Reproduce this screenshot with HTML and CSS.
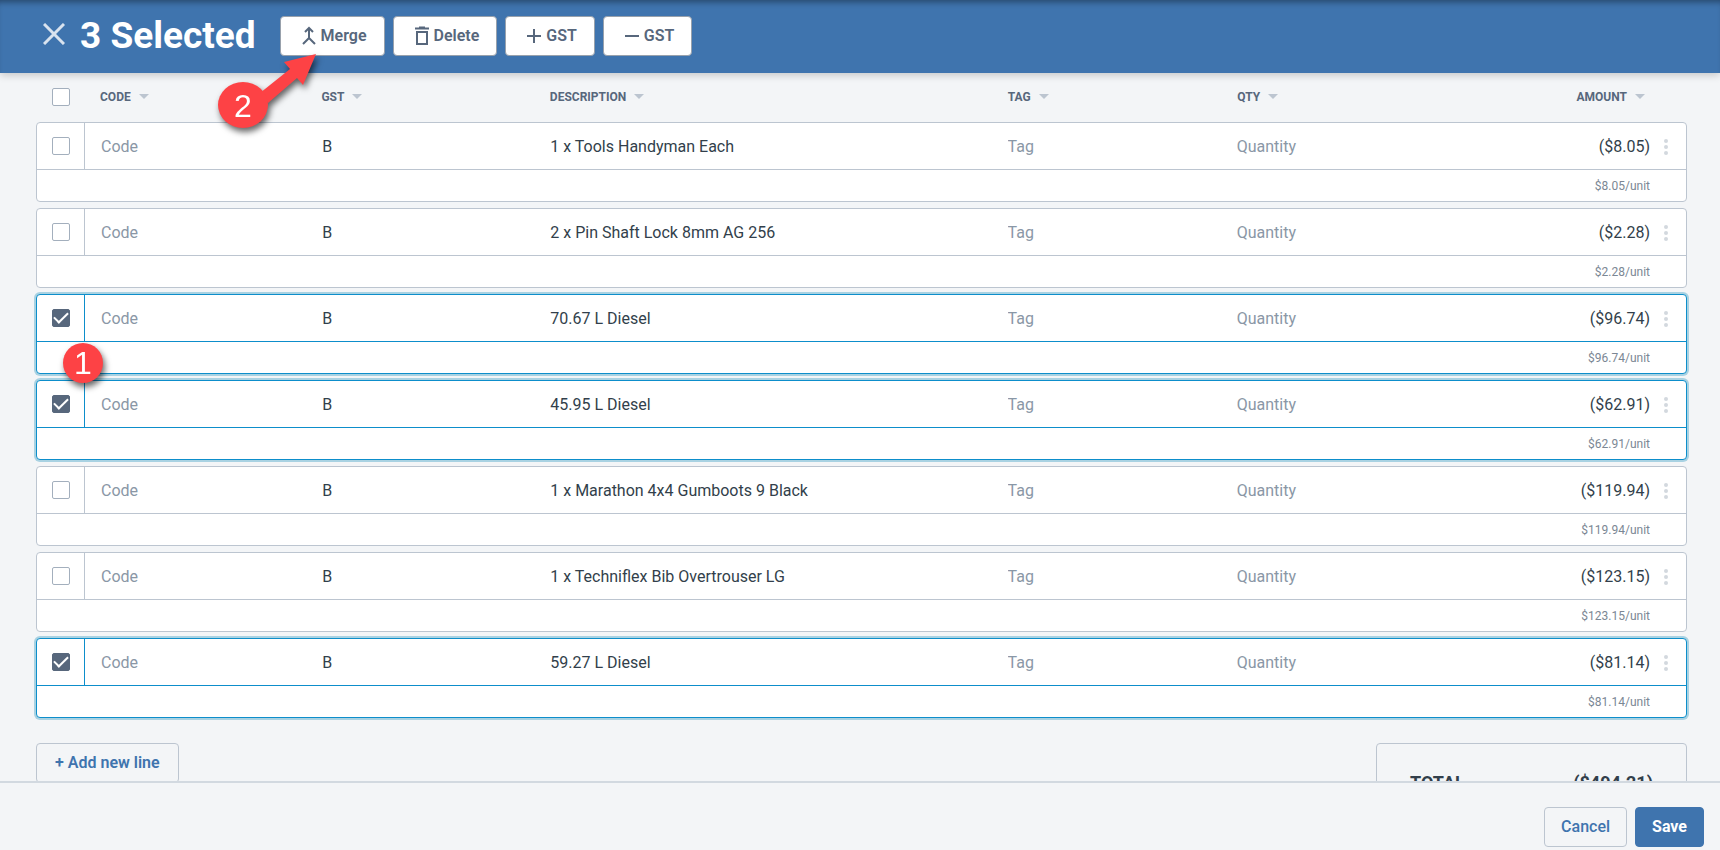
FILE: index.html
```html
<!DOCTYPE html>
<html lang="en">
<head>
    <meta charset="UTF-8">
    <meta name="viewport" content="width=device-width, initial-scale=1.0">
    <title>Line items</title>
    <link rel="stylesheet" href="styles.css">
</head>
<body>
    <header class="toolbar">
        <button class="close" aria-label="Clear selection">
            <svg width="22" height="22" viewBox="0 0 22 22"><path d="M1 1L21 21M21 1L1 21"/></svg>
        </button>
        <h1>3 Selected</h1>
        <div class="actions">
            <button class="action">
                <svg width="16" height="20" viewBox="0 0 16 20"><path d="M8 3V12L2 18M8 12L14 18"/><path d="M4 6L8 2L12 6"/></svg>
                Merge
            </button>
            <button class="action">
                <svg width="16" height="20" viewBox="0 0 16 20"><path d="M1 2.5H15M5 1.5H11M3 6H13V18H3Z"/></svg>
                Delete
            </button>
            <button class="action">
                <svg width="16" height="20" viewBox="0 0 16 20"><path d="M1 10H15M8 3V17"/></svg>
                GST
            </button>
            <button class="action">
                <svg width="16" height="20" viewBox="0 0 16 20"><path d="M1 10H15"/></svg>
                GST
            </button>
        </div>
    </header>

    <main class="content">
        <table class="items">
            <thead>
                <tr>
                    <th class="check"><input type="checkbox" aria-label="Select all"></th>
                    <th>Code</th>
                    <th>GST</th>
                    <th>Description</th>
                    <th>Tag</th>
                    <th>Qty</th>
                    <th class="amount">Amount</th>
                </tr>
            </thead>
        </table>

        <div class="bottom">
            <button class="add">+ Add new line</button>
            <div class="total">
                <span>TOTAL</span>
                <span>($494.21)</span>
            </div>
        </div>
    </main>

    <footer class="footer">
        <button class="cancel">Cancel</button>
        <button class="save">Save</button>
    </footer>

    <svg class="marker marker-one" width="60" height="60" viewBox="0 0 60 60">
        <circle cx="30" cy="30" r="20"/>
        <text x="30" y="41">1</text>
    </svg>
    <svg class="marker marker-two" width="120" height="100" viewBox="0 0 120 100">
        <path d="M106 14L93 45L87 38L58 63L50 53L80 29L74 22Z"/>
        <ellipse cx="33" cy="65" rx="25" ry="23"/>
        <text x="33" y="77">2</text>
    </svg>

    <script src="script.js"></script>
</body>
</html>
```
FILE: styles.css
```css
* {
    box-sizing: border-box;
}
body {
    display: flex;
    flex-direction: column;
    height: 100vh;
    margin: 0;
    overflow: hidden;
    background-color: #f3f5f7;
    color: #323f4b;
    font-family: Roboto, "Noto Sans", sans-serif;
    font-size: 16px;
    line-height: 20px;
}
button, input {
    font: inherit;
}
button {
    cursor: pointer;
}

/* top bar */
.toolbar {
    display: flex;
    align-items: center;
    flex-shrink: 0;
    height: 73px;
    padding: 0 43px 1px;
    background-color: #3f74ae;
    box-shadow: inset 0 6px 6px -4px rgba(0, 0, 0, 0.4), 0 2px 8px rgba(0, 0, 0, 0.2);
}
.close {
    display: flex;
    padding: 0 0 4px;
    border: none;
    background: none;
}
.close svg {
    fill: none;
    stroke: #d9e3ef;
    stroke-width: 3;
}
h1 {
    margin: 0 24px 0 15px;
    color: #fff;
    font-size: 37px;
    font-weight: 700;
    line-height: 40px;
}
.actions {
    display: flex;
    gap: 8px;
}
.action {
    display: flex;
    align-items: center;
    gap: 4px;
    height: 40px;
    padding: 0 17px 0 20px;
    border: 1px solid #98a1ac;
    border-radius: 4px;
    background-color: #fff;
    color: #57677c;
    font-weight: 600;
}
.action svg {
    fill: none;
    stroke: #57677c;
    stroke-width: 2;
}

/* line items */
.content {
    flex: 1;
    min-height: 0;
    padding: 0 33px 0 36px;
    overflow: hidden;
}
.items, .items thead, .items tbody {
    display: block;
}
.items tr {
    display: grid;
    grid-template-columns: 48px 221fr 228fr 457fr 229fr 229fr 200fr 36px;
}
.items th, .items td {
    display: flex;
    align-items: center;
    padding: 2px 0 0 16px;
    font-weight: 400;
}
.items thead tr {
    height: 49px;
}
.items thead th {
    padding-top: 0;
    padding-bottom: 2px;
    color: #57677c;
    font-size: 12px;
    font-weight: 700;
    text-transform: uppercase;
}
.items th:not(.check)::after {
    content: "";
    margin-left: 8px;
    border: 5px solid transparent;
    border-top-color: #bcc5d0;
    border-bottom: none;
}
.items .check {
    justify-content: center;
    padding: 0;
}
.items .amount {
    justify-content: flex-end;
}
.items thead .amount {
    padding-right: 6px;
}
.items thead .check {
    padding: 0 0 2px 1px;
}
.items tbody {
    margin-bottom: 6px;
    border: 1px solid #bcc5d0;
    border-radius: 4px;
    background-color: #fff;
}
.items tbody tr:first-child {
    height: 47px;
    border-bottom: 1px solid #bcc5d0;
}
.items tbody .check {
    border-right: 1px solid #bcc5d0;
}
.items tbody.selected,
.selected tr:first-child,
.selected .check {
    border-color: #0d8ecb !important;
}
.items tbody.selected {
    box-shadow: 0 0 0 2px #a9d2e2;
}
.items input[type="text"] {
    width: 100%;
    padding: 0;
    border: none;
    outline: none;
    background: none;
    color: inherit;
}
.items input::placeholder {
    color: #8a97a6;
    opacity: 1;
}
input[type="checkbox"] {
    display: grid;
    place-content: center;
    width: 18px;
    height: 18px;
    margin: 0;
    appearance: none;
    border: 1px solid #a3afbd;
    border-radius: 2px;
    background-color: #fff;
}
input[type="checkbox"]:checked {
    border-color: #57677c;
    background-color: #57677c;
}
input[type="checkbox"]:checked::before {
    content: "";
    width: 12px;
    height: 6px;
    margin-bottom: 4px;
    border: solid #fff;
    border-width: 0 0 2px 2px;
    transform: rotate(-45deg);
}
.items .menu {
    justify-content: center;
    padding: 2px 4px 0 0;
}
.menu button {
    display: flex;
    padding: 0;
    border: none;
    background: none;
}
.menu svg {
    fill: #d3d8de;
}
.items .unit {
    grid-column: 1 / 8;
    justify-content: flex-end;
    height: 31px;
    padding-top: 0;
    color: #7b8794;
    font-size: 12px;
}

/* add button and total */
.bottom {
    display: flex;
    align-items: flex-start;
    justify-content: space-between;
    padding-top: 19px;
}
.add, .cancel, .save {
    height: 40px;
    padding: 0 16px;
    border: 1px solid #bcc5d0;
    border-radius: 4px;
    background: none;
    color: #3f74ae;
    font-weight: 500;
}
.add {
    padding: 0 18px;
    font-weight: 600;
}
.total {
    display: flex;
    justify-content: space-between;
    width: 311px;
    padding: 29px 33px;
    border: 1px solid #bcc5d0;
    border-radius: 4px;
    font-size: 18px;
    font-weight: 700;
}

.footer {
    display: flex;
    align-items: flex-start;
    justify-content: flex-end;
    gap: 8px;
    flex-shrink: 0;
    height: 69px;
    padding: 24px 16px 0;
    border-top: 2px solid #d2d9e0;
    background-color: #f3f5f7;
}
.footer .save {
    border-color: #3f74ae;
    background-color: #3f74ae;
    color: #fff;
    font-weight: 700;
}

/* numbered steps over the page */
.marker {
    position: absolute;
    overflow: visible;
    fill: #fd4245;
    filter: drop-shadow(2px 4px 3px rgba(0, 0, 0, 0.6));
    pointer-events: none;
}
.marker text {
    fill: #fff;
    font-family: "Liberation Sans", Arial, sans-serif;
    font-size: 32px;
    text-anchor: middle;
}
.marker-one {
    top: 333px;
    left: 53px;
}
.marker-two {
    top: 40px;
    left: 210px;
}
```
FILE: script.js
```javascript
const items = [
    { description: '1 x Tools Handyman Each', amount: '8.05' },
    { description: '2 x Pin Shaft Lock 8mm AG 256', amount: '2.28' },
    { description: '70.67 L Diesel', amount: '96.74', selected: true },
    { description: '45.95 L Diesel', amount: '62.91', selected: true },
    { description: '1 x Marathon 4x4 Gumboots 9 Black', amount: '119.94' },
    { description: '1 x Techniflex Bib Overtrouser LG', amount: '123.15' },
    { description: '59.27 L Diesel', amount: '81.14', selected: true }
];

const table = document.querySelector('.items');

items.forEach(item => {
    const body = document.createElement('tbody');
    if (item.selected) {
        body.className = 'selected';
    }
    body.innerHTML = `
        <tr>
            <td class="check"><input type="checkbox" aria-label="Select line" ${item.selected ? 'checked' : ''}></td>
            <td><input type="text" placeholder="Code" aria-label="Code"></td>
            <td>B</td>
            <td>${item.description}</td>
            <td><input type="text" placeholder="Tag" aria-label="Tag"></td>
            <td><input type="text" placeholder="Quantity" aria-label="Quantity"></td>
            <td class="amount">($${item.amount})</td>
            <td class="menu">
                <button aria-label="More">
                    <svg width="4" height="16" viewBox="0 0 4 16"><circle cx="2" cy="2" r="2"/><circle cx="2" cy="8" r="2"/><circle cx="2" cy="14" r="2"/></svg>
                </button>
            </td>
        </tr>
        <tr>
            <td class="unit">$${item.amount}/unit</td>
        </tr>`;
    table.appendChild(body);
});
```
